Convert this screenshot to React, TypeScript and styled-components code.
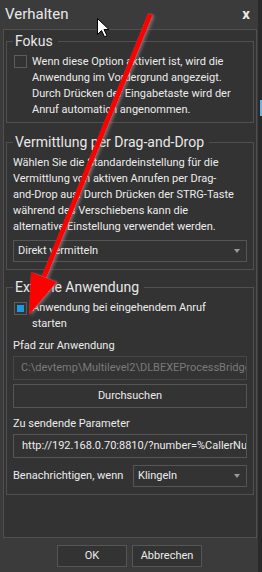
import React from "react";
import styled, { createGlobalStyle } from "styled-components";

const Global = createGlobalStyle`
  html, body { margin: 0; padding: 0; background: #2b2b2b; }
  body { font-family: Roboto, "Noto Sans", sans-serif; }
`;

const Screen = styled.div`
  position: relative;
  width: 262px;
  height: 572px;
  display: flex;
  overflow: hidden;
  background: #2b2b2b;
`;

const Dialog = styled.div`
  width: 258px;
  height: 572px;
  background: #3b3b3b;
  display: flex;
  flex-direction: column;
  color: #ececec;
  font-family: Roboto, "Noto Sans", sans-serif;
  font-size: 11px;
  line-height: 16px;
`;

const Backdrop = styled.div`
  width: 4px;
  display: flex;
  flex-direction: column;
  background: #2a2a2a;
`;

const BackdropTile = styled.div`
  margin: 100px 0 0 2px;
  height: 16px;
  background: #6db3e6;
`;

const TitleBar = styled.div`
  height: 27px;
  flex: none;
  display: flex;
  align-items: center;
  justify-content: space-between;
  padding: 0 8px 0 5px;
  font-size: 15px;
  color: #e8e8e8;
`;

const Close = styled.span`
  font-weight: bold;
  font-size: 15px;
`;

const Panel = styled.div`
  margin: 2px 1px 0 3px;
  height: 509px;
  flex: none;
  box-sizing: border-box;
  border: 1px solid #505050;
  background: #333333;
  padding: 2px 2px 0 2px;
  display: flex;
  flex-direction: column;
`;

const Group = styled.fieldset<{ $mt: number; $pb: number }>`
  margin: ${(p) => p.$mt}px 0 0 0;
  padding: 4px 6px ${(p) => p.$pb}px 6px;
  border: 1px solid #505050;
  min-width: 0;
  display: flex;
  flex-direction: column;
`;

const Legend = styled.legend`
  font-size: 14px;
  line-height: 18px;
  padding: 0 5px 0 2px;
  color: #e8e8e8;
`;

const CheckRow = styled.div`
  display: flex;
  align-items: flex-start;
  gap: 5px;
  padding-left: 1px;
`;

const Check = styled.span<{ $checked?: boolean; $mt: number }>`
  flex: none;
  width: 13px;
  height: 13px;
  box-sizing: border-box;
  margin-top: ${(p) => p.$mt}px;
  border: 1px solid #5c5c5c;
  display: flex;
  align-items: center;
  justify-content: center;
  &::after {
    content: "";
    width: 7px;
    height: 7px;
    background: ${(p) => (p.$checked ? "#1b9ae0" : "transparent")};
  }
`;

const Text = styled.div<{ $mt?: number }>`
  white-space: nowrap;
  margin-top: ${(p) => p.$mt ?? 0}px;
`;

const Combo = styled.div<{ $mt?: number; $w?: number }>`
  margin-top: ${(p) => p.$mt ?? 0}px;
  height: 22px;
  width: ${(p) => (p.$w ? `${p.$w}px` : "auto")};
  box-sizing: border-box;
  border: 1px solid #555;
  background: #333;
  display: flex;
  align-items: center;
  justify-content: space-between;
  padding: 0 6px 0 4px;
  flex: none;
  &::after {
    content: "";
    border-left: 3.5px solid transparent;
    border-right: 3.5px solid transparent;
    border-top: 4px solid #9a9a9a;
  }
`;

const Input = styled.div<{ $mt: number; $disabled?: boolean; $pl: number }>`
  margin-top: ${(p) => p.$mt}px;
  height: 24px;
  box-sizing: border-box;
  border: 1px solid ${(p) => (p.$disabled ? "#474747" : "#555")};
  background: #333;
  color: ${(p) => (p.$disabled ? "#7a7a7a" : "#ececec")};
  display: flex;
  align-items: center;
  padding-left: ${(p) => p.$pl}px;
  white-space: nowrap;
  overflow: hidden;
`;

const Button = styled.div<{ $mt?: number; $w?: number }>`
  margin-top: ${(p) => p.$mt ?? 0}px;
  height: ${(p) => (p.$w ? 22 : 24)}px;
  width: ${(p) => (p.$w ? `${p.$w}px` : "auto")};
  box-sizing: border-box;
  border: 1px solid #555;
  background: #333;
  display: flex;
  align-items: center;
  justify-content: center;
`;

const NotifyRow = styled.div`
  margin-top: 7px;
  display: flex;
  align-items: center;
  justify-content: space-between;
`;

const Footer = styled.div`
  flex: 1;
  display: flex;
  justify-content: center;
  align-items: flex-start;
  padding-top: 7px;
  padding-left: 1px;
  gap: 5px;
`;

const Overlay = styled.svg`
  position: absolute;
  left: 0;
  top: 0;
  pointer-events: none;
`;

export default function App() {
  return (
    <>
      <Global />
      <Screen>
        <Dialog>
          <TitleBar>
            <span>Verhalten</span>
            <Close>x</Close>
          </TitleBar>
          <Panel>
            <Group $mt={0} $pb={4}>
              <Legend>Fokus</Legend>
              <CheckRow>
                <Check $mt={1} />
                <Text>
                  Wenn diese Option aktiviert ist, wird die
                  <br />
                  Anwendung im Vordergrund angezeigt.
                  <br />
                  Durch Drücken der Eingabetaste wird der
                  <br />
                  Anruf automatich angenommen.
                </Text>
              </CheckRow>
            </Group>
            <Group $mt={10} $pb={7}>
              <Legend>Vermittlung per Drag-and-Drop</Legend>
              <Text>
                Wählen Sie die Standardeinstellung für die
                <br />
                Vermittlung von aktiven Anrufen per Drag-
                <br />
                and-Drop aus. Durch Drücken der STRG-Taste
                <br />
                während des Verschiebens kann die
                <br />
                alternative Einstellung verwendet werden.
              </Text>
              <Combo $mt={5}>Direkt vermitteln</Combo>
            </Group>
            <Group $mt={8} $pb={7}>
              <Legend>Externe Anwendung</Legend>
              <CheckRow>
                <Check $mt={2} $checked />
                <Text>
                  Anwendung bei eingehendem Anruf
                  <br />
                  starten
                </Text>
              </CheckRow>
              <Text $mt={6}>Pfad zur Anwendung</Text>
              <Input $mt={2} $pl={7} $disabled>
                C:\devtemp\Multilevel2\DLBEXEProcessBridge.exe
              </Input>
              <Button $mt={4}>Durchsuchen</Button>
              <Text $mt={8}>Zu sendende Parameter</Text>
              <Input $mt={2} $pl={8}>
                http://192.168.0.70:8810/?number=%CallerNumber%
              </Input>
              <NotifyRow>
                <Text>Benachrichtigen, wenn</Text>
                <Combo $w={114}>Klingeln</Combo>
              </NotifyRow>
            </Group>
          </Panel>
          <Footer>
            <Button $w={70}>OK</Button>
            <Button $w={70}>Abbrechen</Button>
          </Footer>
        </Dialog>
        <Backdrop>
          <BackdropTile />
        </Backdrop>
        <Overlay width="262" height="572" viewBox="0 0 262 572">
          <defs>
            <filter id="glow" x="-20%" y="-20%" width="140%" height="140%">
              <feDropShadow dx="2" dy="1" stdDeviation="1.5" floodColor="#9a9a9a" floodOpacity="0.55" />
            </filter>
          </defs>
          <g filter="url(#glow)">
            <line x1="150.5" y1="14" x2="44" y2="277" stroke="#ff0000" strokeWidth="5" />
            <polygon points="57,282 31,272 29,315" fill="#ff0000" />
          </g>
          <path
            d="M97.5,18.5 L97.5,34.5 L101.5,30.5 L104.5,36.8 L107,35.7 L104,29.5 L109,29.5 Z"
            fill="#ffffff"
            stroke="#000000"
            strokeWidth="1"
          />
        </Overlay>
      </Screen>
    </>
  );
}
